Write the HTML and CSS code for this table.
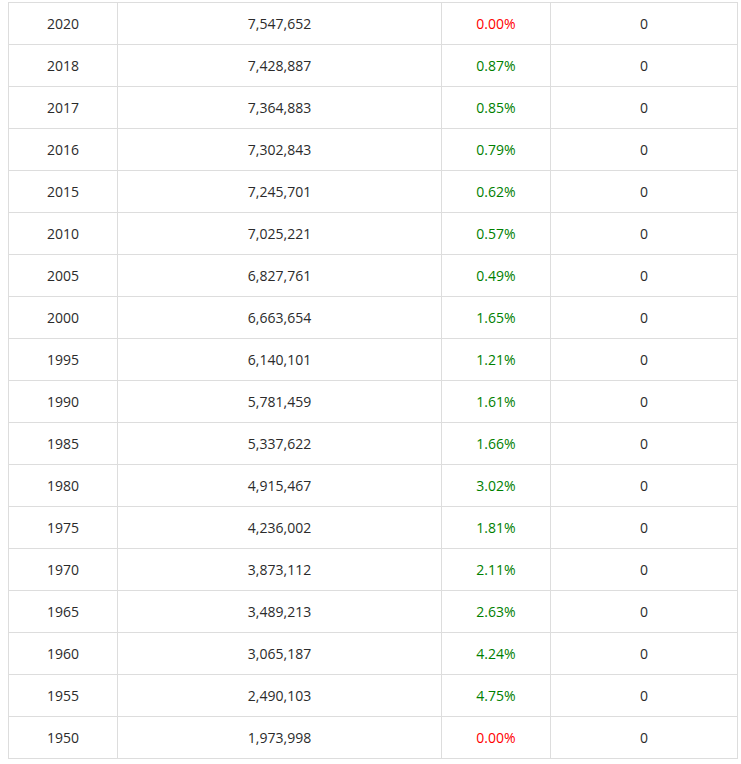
FILE: index.html
```html
<!DOCTYPE html>
<html>
<head>
<meta charset="utf-8">
<link rel="stylesheet" href="styles.css">
</head>
<body>
<table class="pop-table">
<colgroup><col class="c1"><col class="c2"><col class="c3"><col class="c4"></colgroup>
<tbody>
<tr><td>2020</td><td>7,547,652</td><td class="neg">0.00%</td><td>0</td></tr>
<tr><td>2018</td><td>7,428,887</td><td class="pos">0.87%</td><td>0</td></tr>
<tr><td>2017</td><td>7,364,883</td><td class="pos">0.85%</td><td>0</td></tr>
<tr><td>2016</td><td>7,302,843</td><td class="pos">0.79%</td><td>0</td></tr>
<tr><td>2015</td><td>7,245,701</td><td class="pos">0.62%</td><td>0</td></tr>
<tr><td>2010</td><td>7,025,221</td><td class="pos">0.57%</td><td>0</td></tr>
<tr><td>2005</td><td>6,827,761</td><td class="pos">0.49%</td><td>0</td></tr>
<tr><td>2000</td><td>6,663,654</td><td class="pos">1.65%</td><td>0</td></tr>
<tr><td>1995</td><td>6,140,101</td><td class="pos">1.21%</td><td>0</td></tr>
<tr><td>1990</td><td>5,781,459</td><td class="pos">1.61%</td><td>0</td></tr>
<tr><td>1985</td><td>5,337,622</td><td class="pos">1.66%</td><td>0</td></tr>
<tr><td>1980</td><td>4,915,467</td><td class="pos">3.02%</td><td>0</td></tr>
<tr><td>1975</td><td>4,236,002</td><td class="pos">1.81%</td><td>0</td></tr>
<tr><td>1970</td><td>3,873,112</td><td class="pos">2.11%</td><td>0</td></tr>
<tr><td>1965</td><td>3,489,213</td><td class="pos">2.63%</td><td>0</td></tr>
<tr><td>1960</td><td>3,065,187</td><td class="pos">4.24%</td><td>0</td></tr>
<tr><td>1955</td><td>2,490,103</td><td class="pos">4.75%</td><td>0</td></tr>
<tr><td>1950</td><td>1,973,998</td><td class="neg">0.00%</td><td>0</td></tr>
</tbody>
</table>
</body>
</html>
```
FILE: styles.css
```css
html, body {
  margin: 0;
  padding: 0;
  background: #fff;
}
body {
  padding: 2px 0 0 8px;
  font-family: "Open Sans", "Noto Sans", sans-serif;
  font-size: 14px;
  color: #2b2b2b;
}
.pop-table {
  border-collapse: collapse;
  table-layout: fixed;
  width: 729px;
}
.c1 { width: 109px; }
.c2 { width: 324px; }
.c3 { width: 109px; }
.c4 { width: 187px; }
.pop-table td {
  border: 1px solid #ddd;
  height: 42px;
  padding: 0;
  text-align: center;
  vertical-align: middle;
  box-sizing: border-box;
  line-height: 20px;
}
.neg { color: #ff0000; }
.pos { color: #008000; }
```
